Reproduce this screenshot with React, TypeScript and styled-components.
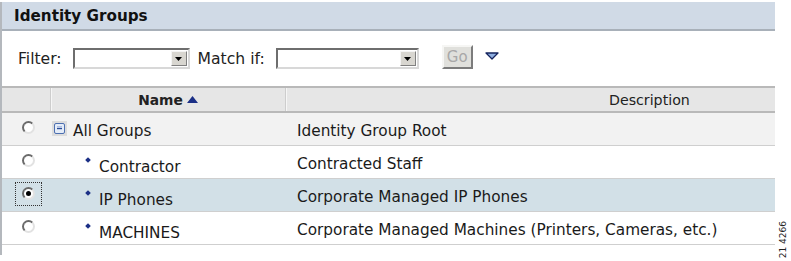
import styled, { createGlobalStyle } from 'styled-components';

const GlobalStyle = createGlobalStyle`
  body {
    margin: 0;
    background: #ffffff;
    font-family: "DejaVu Sans", Verdana, sans-serif;
    color: #1a1a1a;
  }
`;

type Group = {
  name: string;
  description: string;
  isRoot?: boolean;
  selected?: boolean;
  tone: 'grey' | 'white' | 'blue';
};

const groups: Group[] = [
  { name: 'All Groups', description: 'Identity Group Root', isRoot: true, tone: 'grey' },
  { name: 'Contractor', description: 'Contracted Staff', tone: 'white' },
  { name: 'IP Phones', description: 'Corporate Managed IP Phones', selected: true, tone: 'blue' },
  { name: 'MACHINES', description: 'Corporate Managed Machines (Printers, Cameras, etc.)', tone: 'white' },
];

const ROW_BG = { grey: '#f2f2f2', white: '#ffffff', blue: '#d2e0e7' };

const SelectBox = ({ width }: { width: number }) => (
  <Select $width={width}>
    <SelectArrow>
      <svg width="7" height="4" viewBox="0 0 7 4">
        <polygon points="0,0 7,0 3.5,4" fill="#000" />
      </svg>
    </SelectArrow>
  </Select>
);

const ExpandIcon = () => (
  <ExpandBox>
    <svg width="11" height="11" viewBox="0 0 11 11">
      <rect x="0.5" y="0.5" width="10" height="10" rx="1.5" fill="#e4ecf8" stroke="#4c6fb0" />
      <line x1="3" y1="5.5" x2="8" y2="5.5" stroke="#2a4c98" strokeWidth="1.4" />
      <line x1="3" y1="3.5" x2="8" y2="3.5" stroke="#9fb4dc" strokeWidth="0.8" />
    </svg>
  </ExpandBox>
);

const App = () => {
  return (
    <>
      <GlobalStyle />
      <Page>
        <Panel>
          <TitleBar>Identity Groups</TitleBar>
          <FilterBar>
            <FilterLabel>Filter:</FilterLabel>
            <SelectBox width={117} />
            <FilterLabel>Match if:</FilterLabel>
            <SelectBox width={143} />
            <GoButton disabled>Go</GoButton>
            <svg width="14" height="8" viewBox="0 0 14 8">
              <polygon points="1,1 13,1 7,7" fill="#8eaee0" stroke="#15245e" strokeWidth="1.3" strokeLinejoin="round" />
            </svg>
          </FilterBar>
          <HeaderRow>
            <HeaderCell />
            <HeaderCell $align="center">
              <SortLabel>Name</SortLabel>
              <svg width="11" height="7" viewBox="0 0 11 7">
                <polygon points="5.5,0 11,7 0,7" fill="#1b2f86" />
              </svg>
            </HeaderCell>
            <HeaderCell $pad={323}>Description</HeaderCell>
          </HeaderRow>
          {groups.map((g) => (
            <Row key={g.name} $bg={ROW_BG[g.tone]}>
              <RadioCell>
                <Focus $on={!!g.selected}>
                  <Radio $checked={!!g.selected} />
                </Focus>
              </RadioCell>
              <NameCell $root={!!g.isRoot}>
                {g.isRoot ? (
                  <>
                    <ExpandIcon />
                    <RootName>{g.name}</RootName>
                  </>
                ) : (
                  <>
                    <Bullet />
                    <ChildName>{g.name}</ChildName>
                  </>
                )}
              </NameCell>
              <DescCell>{g.description}</DescCell>
            </Row>
          ))}
        </Panel>
        <Side>
          <Stamp>21 4266</Stamp>
        </Side>
      </Page>
    </>
  );
};

export default App;

const Page = styled.div`
  display: flex;
  width: 791px;
  height: 261px;
  overflow: hidden;
`;

const Panel = styled.div`
  width: 773px;
  height: 253px;
  margin-top: 2px;
  border-left: 2px solid #b4b8bd;
  display: flex;
  flex-direction: column;
`;

const TitleBar = styled.div`
  height: 27px;
  flex-shrink: 0;
  display: flex;
  align-items: center;
  padding-left: 12px;
  background: #d0dae6;
  border-bottom: 2px solid #a8b0b9;
  font-size: 15.2px;
  font-weight: bold;
  color: #111;
`;

const FilterBar = styled.div`
  height: 55px;
  flex-shrink: 0;
  display: flex;
  align-items: center;
  padding-left: 16px;
  font-size: 15.6px;

  & > svg {
    margin-left: 12px;
    margin-top: -5px;
  }
`;

const FilterLabel = styled.span`
  margin-right: 11px;
  color: #222;

  & + div {
    margin-right: 8px;
  }
`;

const Select = styled.div<{ $width: number }>`
  width: ${(p) => p.$width}px;
  height: 21px;
  box-sizing: border-box;
  display: flex;
  justify-content: flex-end;
  align-items: stretch;
  padding: 1px;
  background: #fff;
  border: 2px solid;
  border-color: #6e6e6e #d8d8d8 #d8d8d8 #6e6e6e;
`;

const SelectArrow = styled.div`
  width: 16px;
  box-sizing: border-box;
  display: flex;
  align-items: center;
  justify-content: center;
  background: #d8d6d0;
  border: 1px solid;
  border-color: #f4f4f4 #808080 #808080 #f4f4f4;
`;

const GoButton = styled.button`
  margin-left: 15px;
  width: 31px;
  height: 24px;
  padding: 0;
  margin-top: -3px;
  background: #e0e0dc;
  border: 2px solid;
  border-color: #f6f6f4 #7c7c7c #7c7c7c #f6f6f4;
  font-family: "DejaVu Sans", Verdana, sans-serif;
  font-size: 15px;
  color: #a8a8a8;
`;

const HeaderRow = styled.div`
  height: 23px;
  flex-shrink: 0;
  display: grid;
  grid-template-columns: 48px 235px 1fr;
  background: #e6e6e6;
  border-top: 2px solid #b9b9b9;
  border-bottom: 2px solid #b9b9b9;
  font-size: 14.2px;
  color: #222;
`;

const HeaderCell = styled.div<{ $align?: string; $pad?: number }>`
  display: flex;
  align-items: center;
  gap: 4px;
  justify-content: ${(p) => (p.$align === 'center' ? 'center' : 'flex-start')};
  padding-left: ${(p) => p.$pad ?? 0}px;

  & + & {
    border-left: 1px solid #cdcdcd;
    box-shadow: inset 1px 0 0 #f6f6f6;
  }
`;

const SortLabel = styled.span`
  font-weight: bold;
  font-size: 13.8px;
`;

const Row = styled.div<{ $bg: string }>`
  height: 32px;
  flex-shrink: 0;
  display: grid;
  grid-template-columns: 48px 235px 1fr;
  background: ${(p) => p.$bg};
  border-bottom: 1px solid #cfcfcf;
  font-size: 15.3px;
  color: #1a1a1a;
`;

const RadioCell = styled.div`
  display: flex;
  align-items: center;
  justify-content: center;
  padding-left: 4px;
  padding-bottom: 3px;
`;

const Focus = styled.div<{ $on: boolean }>`
  width: 27px;
  height: 24px;
  box-sizing: border-box;
  display: flex;
  align-items: center;
  justify-content: center;
  border: 1px dotted ${(p) => (p.$on ? '#333' : 'transparent')};
`;

const Radio = styled.div<{ $checked: boolean }>`
  width: 13px;
  height: 13px;
  box-sizing: border-box;
  border-radius: 50%;
  background: #fff;
  border: 2px solid;
  border-color: #6a6a6a #e2e2e2 #e2e2e2 #6a6a6a;
  display: flex;
  align-items: center;
  justify-content: center;

  &::after {
    content: '';
    width: 5px;
    height: 5px;
    border-radius: 50%;
    background: ${(p) => (p.$checked ? '#000' : 'transparent')};
  }
`;

const NameCell = styled.div<{ $root: boolean }>`
  display: flex;
  align-items: center;
  padding-left: ${(p) => (p.$root ? 2 : 36)}px;
  gap: ${(p) => (p.$root ? 6 : 9)}px;
`;

const ExpandBox = styled.div`
  width: 15px;
  height: 15px;
  display: flex;
  align-items: center;
  justify-content: center;
  background: #dcdcdc;
  margin-bottom: 2px;
`;

const RootName = styled.span`
  padding-top: 3px;
`;

const Bullet = styled.div`
  width: 4px;
  height: 4px;
  background: #1b2f86;
  transform: rotate(45deg);
  margin-bottom: 5px;
`;

const ChildName = styled.span`
  padding-top: 10px;
`;

const DescCell = styled.div`
  display: flex;
  align-items: center;
  padding-left: 12px;
  padding-top: 4px;
  white-space: nowrap;
`;

const Side = styled.div`
  flex: 1;
  display: flex;
  align-items: flex-end;
  justify-content: center;
  padding-bottom: 3px;
`;

const Stamp = styled.div`
  writing-mode: vertical-rl;
  transform: rotate(180deg);
  font-family: "DejaVu Sans", Arial, sans-serif;
  font-size: 9px;
  color: #222;
  white-space: nowrap;
`;
